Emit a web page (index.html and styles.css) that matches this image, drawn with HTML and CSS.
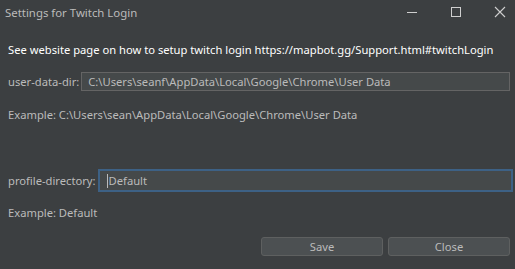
FILE: index.html
```html
<!DOCTYPE html>
<html>
<head>
<meta charset="utf-8">
<link rel="stylesheet" href="styles.css">
</head>
<body>
<div class="window">
  <div class="titlebar">
    <span class="title">Settings for Twitch Login</span>
    <div class="controls">
      <span class="ctl"><svg width="12" height="12" viewBox="0 0 12 12"><line x1="1" y1="6.5" x2="11" y2="6.5" stroke="#cfcfcf" stroke-width="1"/></svg></span>
      <span class="ctl"><svg width="12" height="12" viewBox="0 0 12 12"><rect x="1.5" y="1.5" width="9" height="9" fill="none" stroke="#cfcfcf" stroke-width="1"/></svg></span>
      <span class="ctl"><svg width="12" height="12" viewBox="0 0 12 12"><path d="M1 1 L11 11 M11 1 L1 11" stroke="#cfcfcf" stroke-width="1.1"/></svg></span>
    </div>
  </div>
  <div class="content">
    <div class="info">See website page on how to setup twitch login https://mapbot.gg/Support.html#twitchLogin</div>
    <div class="row r1">
      <span class="label">user-data-dir:</span>
      <div class="field">C:\Users\seanf\AppData\Local\Google\Chrome\User Data</div>
    </div>
    <div class="example ex1">Example: C:\Users\sean\AppData\Local\Google\Chrome\User Data</div>
    <div class="row r2">
      <span class="label">profile-directory:</span>
      <div class="field focus"><span class="caret"></span>Default</div>
    </div>
    <div class="example ex2">Example: Default</div>
    <div class="buttons">
      <button class="btn">Save</button>
      <button class="btn">Close</button>
    </div>
  </div>
</div>
</body>
</html>
```
FILE: styles.css
```css
html, body {
  margin: 0;
  padding: 0;
  background: #3c3f41;
}
.window {
  width: 515px;
  height: 269px;
  background: #3c3f41;
  font-family: "Noto Sans", "Open Sans", sans-serif;
  font-size: 11.2px;
  color: #bbbbbb;
  display: flex;
  flex-direction: column;
  overflow: hidden;
}
.titlebar {
  height: 24px;
  display: flex;
  align-items: center;
  justify-content: space-between;
  padding-left: 5px;
}
.title {
  color: #bbbbbb;
  font-size: 11.4px;
}
.controls {
  display: flex;
  height: 24px;
  margin-right: -7px;
}
.ctl {
  width: 44px;
  display: flex;
  align-items: center;
  justify-content: center;
}
.content {
  display: flex;
  flex-direction: column;
  padding: 16px 5px 0 8px;
}
.info {
  color: #ffffff;
  height: 20px;
  line-height: 20px;
  white-space: nowrap;
}
.row {
  display: flex;
  align-items: center;
  gap: 2px;
}
.r1 {
  margin-top: 12px;
  height: 19px;
}
.field {
  flex: 1;
  height: 19px;
  box-sizing: border-box;
  border: 1px solid #646464;
  background: #45494a;
  padding-left: 6px;
  line-height: 17px;
  color: #bbbbbb;
  white-space: nowrap;
  display: flex;
  align-items: center;
}
.field.focus {
  height: 23px;
  border: 2px solid #3d6185;
  margin-right: -3px;
  padding-left: 7px;
}
.caret {
  width: 1px;
  height: 14px;
  background: #bbbbbb;
  margin-right: 1px;
}
.example {
  height: 20px;
  line-height: 20px;
  white-space: nowrap;
}
.ex1 {
  margin-top: 14px;
}
.r2 {
  margin-top: 44px;
  height: 23px;
}
.ex2 {
  margin-top: 11px;
}
.buttons {
  margin-top: 14px;
  display: flex;
  justify-content: flex-end;
  gap: 5px;
}
.btn {
  width: 122px;
  height: 19px;
  box-sizing: border-box;
  border: 1px solid #5e6060;
  border-radius: 3px;
  background: #4c5052;
  color: #bbbbbb;
  font-family: "Noto Sans", "Open Sans", sans-serif;
  font-size: 11.2px;
  padding: 0;
  line-height: 17px;
}
```
